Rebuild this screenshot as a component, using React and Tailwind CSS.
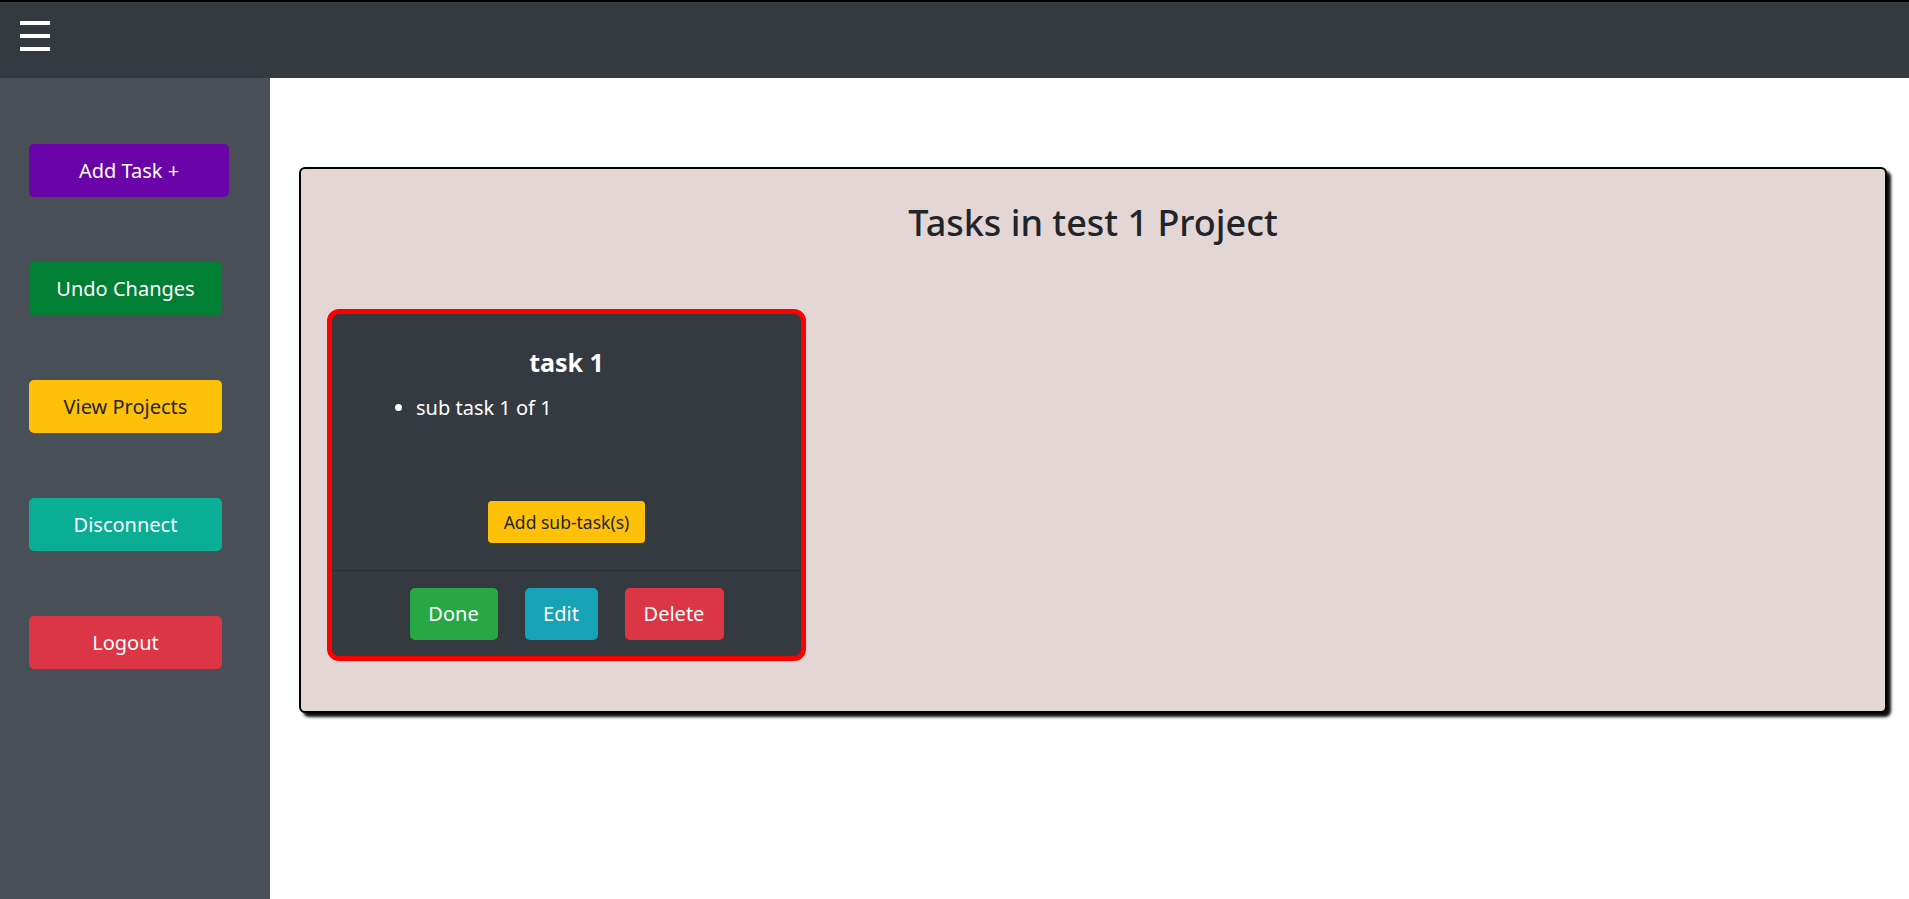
import React from "react";

const font = { fontFamily: '"Noto Sans", "Open Sans", sans-serif' };

function SideButton({ label, cls, w }) {
  return (
    <button
      className={`${cls} ${w} h-[53px] rounded-[5px] text-[20px] flex items-center justify-center`}
    >
      {label}
    </button>
  );
}

export default function App() {
  return (
    <div className="w-[1909px] h-[899px] flex flex-col overflow-hidden bg-white" style={font}>
      <header className="h-[78px] shrink-0 bg-[#343a40] border-t-2 border-black flex items-start">
        <div className="ml-[20px] mt-[19px] flex flex-col gap-[9px]">
          <span className="block w-[30px] h-[4px] bg-white" />
          <span className="block w-[30px] h-[4px] bg-white" />
          <span className="block w-[30px] h-[4px] bg-white" />
        </div>
      </header>
      <div className="flex flex-1">
        <aside className="w-[270px] shrink-0 bg-[#484f56] pt-[66px] pl-[29px] flex flex-col gap-[65px]">
          <SideButton label="Add Task +" cls="bg-[#6a04a8] text-white" w="w-[200px]" />
          <SideButton label="Undo Changes" cls="bg-[#017f35] text-white" w="w-[193px]" />
          <SideButton label="View Projects" cls="bg-[#ffc107] text-[#212529]" w="w-[193px]" />
          <SideButton label="Disconnect" cls="bg-[#0aae94] text-white" w="w-[193px]" />
          <SideButton label="Logout" cls="bg-[#dc3545] text-white" w="w-[193px]" />
        </aside>
        <main className="flex-1 pt-[89px] pl-[29px] pr-[22px]">
          <section className="h-[546px] bg-[#e5d6d6] border-2 border-black rounded-[6px] shadow-[4px_4px_3px_rgba(0,0,0,0.95)] pt-[30px] pl-[26px]">
            <h2 className="text-center text-[36px] leading-[48px] font-medium text-[#212529] -ml-[26px]">
              Tasks in test 1 Project
            </h2>
            <div className="mt-[62px] w-[479px] h-[352px] border-[5px] border-[#ff0000] rounded-[12px] bg-[#343a40] flex flex-col overflow-hidden">
              <div className="flex-1 flex flex-col pt-[33px]">
                <h5 className="text-center text-white text-[25px] leading-[30px] font-bold">task 1</h5>
                <ul className="list-disc pl-[84px] mt-[16px] text-white text-[20px] leading-[30px]">
                  <li>sub task 1 of 1</li>
                </ul>
                <div className="flex justify-center mt-[78px]">
                  <button className="h-[42px] w-[157px] rounded-[4px] bg-[#ffc107] text-[#212529] text-[17.5px]">
                    Add sub-task(s)
                  </button>
                </div>
              </div>
              <div className="h-[86px] shrink-0 border-t border-[#2a2e33] flex justify-center items-start pt-[17px] gap-[27px]">
                <button className="h-[52px] w-[88px] rounded-[5px] bg-[#28a745] text-white text-[20px]">Done</button>
                <button className="h-[52px] w-[73px] rounded-[5px] bg-[#17a2b8] text-white text-[20px]">Edit</button>
                <button className="h-[52px] w-[99px] rounded-[5px] bg-[#dc3545] text-white text-[20px]">Delete</button>
              </div>
            </div>
          </section>
        </main>
      </div>
    </div>
  );
}
